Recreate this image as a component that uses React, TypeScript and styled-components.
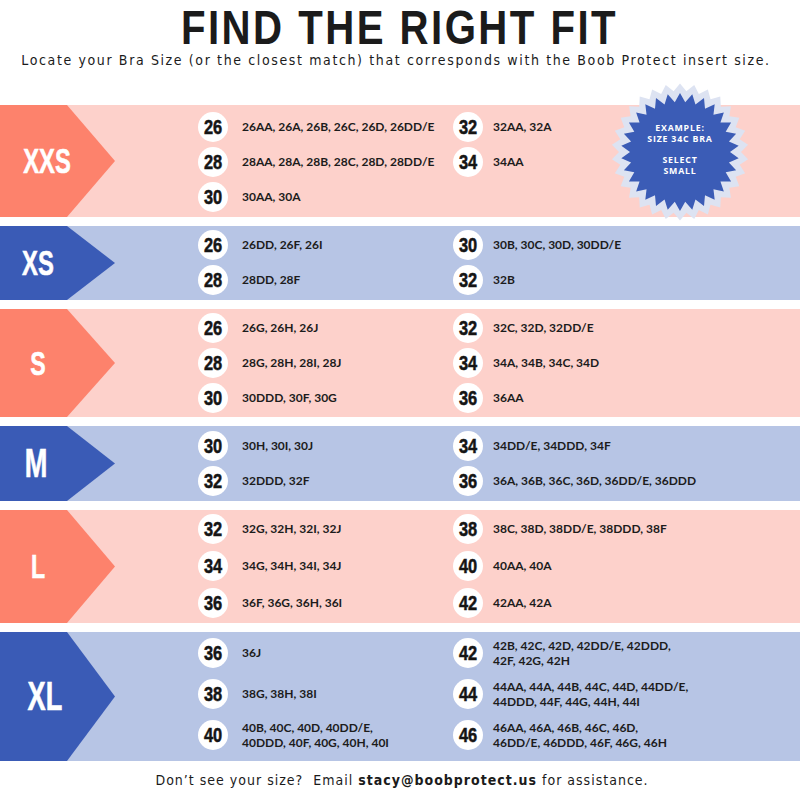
import React from "react";
import styled, { createGlobalStyle } from "styled-components";

const Global = createGlobalStyle`
  html, body { margin: 0; padding: 0; background: #ffffff; }
  body { width: 800px; }
`;

const PINK = "#fdd1cb";
const SALMON = "#fd826c";
const LIGHTBLUE = "#b7c5e5";
const BLUE = "#3a5bb6";

type Tone = "pink" | "blue";

const Page = styled.div`
  width: 800px;
  height: 800px;
  display: flex;
  flex-direction: column;
  position: relative;
  overflow: hidden;
`;

const Header = styled.header`
  height: 105px;
  display: flex;
  flex-direction: column;
  align-items: center;
`;

const Title = styled.h1`
  margin: 2px 0 0 0;
  display: inline-block;
  font-family: "Liberation Sans", Arial, sans-serif;
  font-weight: 700;
  font-size: 49px;
  line-height: 50px;
  letter-spacing: 3px;
  color: #1b1b1b;
  transform: scaleX(0.82);
  transform-origin: center;
  white-space: nowrap;
`;

const Subtitle = styled.p`
  margin: -1px 8px 0 0;
  font-family: "DejaVu Sans Condensed", "Liberation Sans", sans-serif;
  font-weight: 400;
  font-size: 14px;
  line-height: 18px;
  letter-spacing: 1.62px;
  color: #1b1b1b;
  white-space: nowrap;
`;

const Bands = styled.div`
  display: flex;
  flex-direction: column;
  gap: 9px;
`;

const Band = styled.section<{ $tone: Tone; $h: number }>`
  height: ${(p) => p.$h}px;
  background: ${(p) => (p.$tone === "pink" ? PINK : LIGHTBLUE)};
  display: grid;
  grid-template-columns: 198px 255px 1fr;
  grid-template-rows: 100%;
  box-sizing: border-box;
`;

const Label = styled.div<{ $tone: Tone }>`
  width: 115px;
  height: 100%;
  background: ${(p) => (p.$tone === "pink" ? SALMON : BLUE)};
  clip-path: polygon(0 0, 67px 0, 100% 50%, 67px 100%, 0 100%);
  display: flex;
  align-items: center;
`;

const LabelText = styled.span<{ $size: number; $cx: number }>`
  width: ${(p) => p.$cx * 2}px;
  text-align: center;
  display: inline-block;
  font-family: "Liberation Sans", Arial, sans-serif;
  font-weight: 700;
  font-size: ${(p) => p.$size}px;
  color: #ffffff;
  transform: scaleX(0.68);
  transform-origin: center;
  -webkit-text-stroke: 0.6px #ffffff;
`;

const Column = styled.div<{ $pt: number; $gap: number }>`
  display: flex;
  flex-direction: column;
  justify-content: flex-start;
  padding-top: ${(p) => p.$pt}px;
  --entry-gap: ${(p) => p.$gap}px;
`;

const Entry = styled.div<{ $rowH: number }>`
  height: ${(p) => p.$rowH}px;
  display: flex;
  align-items: center;
  gap: var(--entry-gap);
`;

const Circle = styled.div`
  flex: 0 0 30px;
  width: 30px;
  height: 30px;
  border-radius: 50%;
  background: #ffffff;
  display: flex;
  align-items: center;
  justify-content: center;
`;

const CircleNum = styled.span`
  display: inline-block;
  font-family: "Liberation Sans", Arial, sans-serif;
  font-weight: 700;
  font-size: 20px;
  line-height: 20px;
  color: #151515;
  transform: scaleX(0.82);
  -webkit-text-stroke: 0.5px #151515;
`;

const Sizes = styled.div`
  font-family: "Lato", "Open Sans", sans-serif;
  font-weight: 700;
  font-size: 12px;
  line-height: 15px;
  color: #1c1c1c;
  white-space: nowrap;
`;

const Footer = styled.footer`
  flex: 1;
  display: flex;
  align-items: center;
  justify-content: center;
  font-family: "DejaVu Sans Condensed", "Liberation Sans", sans-serif;
  font-size: 14px;
  letter-spacing: 1.0px;
  color: #1b1b1b;
  padding-bottom: 2px;
  padding-left: 4px;
  b { font-weight: 700; }
`;

const Badge = styled.div`
  position: absolute;
  left: 610px;
  top: 82px;
  width: 140px;
  height: 140px;
`;

const BadgeText = styled.div`
  position: absolute;
  inset: 0;
  display: flex;
  flex-direction: column;
  align-items: center;
  justify-content: center;
  padding-bottom: 4px;
  box-sizing: border-box;
  font-family: "Open Sans", "DejaVu Sans", sans-serif;
  font-weight: 700;
  font-size: 8.8px;
  line-height: 11px;
  letter-spacing: 0.8px;
  color: #ffffff;
  text-align: center;
`;

const BadgeGap = styled.div`
  height: 10px;
`;

type Item = [number, string[]];
interface BandData {
  label: string;
  labelSize: number;
  labelCx: number;
  tone: Tone;
  h: number;
  rowH: number;
  pt: number;
  left: Item[];
  right: Item[];
}

const s = (t: string) => [t];

const data: BandData[] = [
  {
    label: "XXS",
    labelSize: 35,
    labelCx: 47,
    tone: "pink",
    h: 112,
    rowH: 35,
    pt: 4,
    left: [
      [26, s("26AA, 26A, 26B, 26C, 26D, 26DD/E")],
      [28, s("28AA, 28A, 28B, 28C, 28D, 28DD/E")],
      [30, s("30AA, 30A")],
    ],
    right: [
      [32, s("32AA, 32A")],
      [34, s("34AA")],
    ],
  },
  {
    label: "XS",
    labelSize: 35,
    labelCx: 38,
    tone: "blue",
    h: 74,
    rowH: 35,
    pt: 1,
    left: [
      [26, s("26DD, 26F, 26I")],
      [28, s("28DD, 28F")],
    ],
    right: [
      [30, s("30B, 30C, 30D, 30DD/E")],
      [32, s("32B")],
    ],
  },
  {
    label: "S",
    labelSize: 34,
    labelCx: 38,
    tone: "pink",
    h: 108,
    rowH: 35,
    pt: 1,
    left: [
      [26, s("26G, 26H, 26J")],
      [28, s("28G, 28H, 28I, 28J")],
      [30, s("30DDD, 30F, 30G")],
    ],
    right: [
      [32, s("32C, 32D, 32DD/E")],
      [34, s("34A, 34B, 34C, 34D")],
      [36, s("36AA")],
    ],
  },
  {
    label: "M",
    labelSize: 40,
    labelCx: 36,
    tone: "blue",
    h: 75,
    rowH: 35,
    pt: 2,
    left: [
      [30, s("30H, 30I, 30J")],
      [32, s("32DDD, 32F")],
    ],
    right: [
      [34, s("34DD/E, 34DDD, 34F")],
      [36, s("36A, 36B, 36C, 36D, 36DD/E, 36DDD")],
    ],
  },
  {
    label: "L",
    labelSize: 34,
    labelCx: 38,
    tone: "pink",
    h: 113,
    rowH: 37,
    pt: 0,
    left: [
      [32, s("32G, 32H, 32I, 32J")],
      [34, s("34G, 34H, 34I, 34J")],
      [36, s("36F, 36G, 36H, 36I")],
    ],
    right: [
      [38, s("38C, 38D, 38DD/E, 38DDD, 38F")],
      [40, s("40AA, 40A")],
      [42, s("42AA, 42A")],
    ],
  },
  {
    label: "XL",
    labelSize: 40,
    labelCx: 45,
    tone: "blue",
    h: 129,
    rowH: 41,
    pt: -1,
    left: [
      [36, s("36J")],
      [38, s("38G, 38H, 38I")],
      [40, ["40B, 40C, 40D, 40DD/E,", "40DDD, 40F, 40G, 40H, 40I"]],
    ],
    right: [
      [42, ["42B, 42C, 42D, 42DD/E, 42DDD,", "42F, 42G, 42H"]],
      [44, ["44AA, 44A, 44B, 44C, 44D, 44DD/E,", "44DDD, 44F, 44G, 44H, 44I"]],
      [46, ["46AA, 46A, 46B, 46C, 46D,", "46DD/E, 46DDD, 46F, 46G, 46H"]],
    ],
  },
];

function star(cx: number, cy: number, rOut: number, rIn: number, n: number) {
  const pts: string[] = [];
  for (let i = 0; i < n * 2; i++) {
    const r = i % 2 === 0 ? rOut : rIn;
    const a = (Math.PI * i) / n - Math.PI / 2;
    pts.push(`${(cx + r * Math.cos(a)).toFixed(2)},${(cy + r * Math.sin(a)).toFixed(2)}`);
  }
  return pts.join(" ");
}

const StarBadge = () => (
  <Badge>
    <svg width="140" height="140" viewBox="0 0 140 140">
      <polygon points={star(70, 70, 68.5, 61, 30)} fill="#dde3f2" />
      <polygon points={star(70, 70, 59, 50, 30)} fill="#3b5cb6" />
    </svg>
    <BadgeText>
      <span>EXAMPLE:</span>
      <span>SIZE 34C BRA</span>
      <BadgeGap />
      <span>SELECT</span>
      <span>SMALL</span>
    </BadgeText>
  </Badge>
);

const EntryView = ({ item, rowH }: { item: Item; rowH: number }) => (
  <Entry $rowH={rowH}>
    <Circle>
      <CircleNum>{item[0]}</CircleNum>
    </Circle>
    <Sizes>
      {item[1].map((line, i) => (
        <div key={i}>{line}</div>
      ))}
    </Sizes>
  </Entry>
);

export default function App() {
  return (
    <Page>
      <Global />
      <Header>
        <Title>FIND THE RIGHT FIT</Title>
        <Subtitle>
          Locate your Bra Size (or the closest match) that corresponds with the Boob Protect insert size.
        </Subtitle>
      </Header>
      <Bands>
        {data.map((b) => (
          <Band key={b.label} $tone={b.tone} $h={b.h}>
            <Label $tone={b.tone}>
              <LabelText $size={b.labelSize} $cx={b.labelCx}>
                {b.label}
              </LabelText>
            </Label>
            <Column $pt={b.pt} $gap={14}>
              {b.left.map((it) => (
                <EntryView key={it[0]} item={it} rowH={b.rowH} />
              ))}
            </Column>
            <Column $pt={b.pt} $gap={10}>
              {b.right.map((it) => (
                <EntryView key={it[0]} item={it} rowH={b.rowH} />
              ))}
            </Column>
          </Band>
        ))}
      </Bands>
      <Footer>
        <span>
          Don’t see your size?&nbsp;&nbsp;Email <b>stacy@boobprotect.us</b> for assistance.
        </span>
      </Footer>
      <StarBadge />
    </Page>
  );
}
